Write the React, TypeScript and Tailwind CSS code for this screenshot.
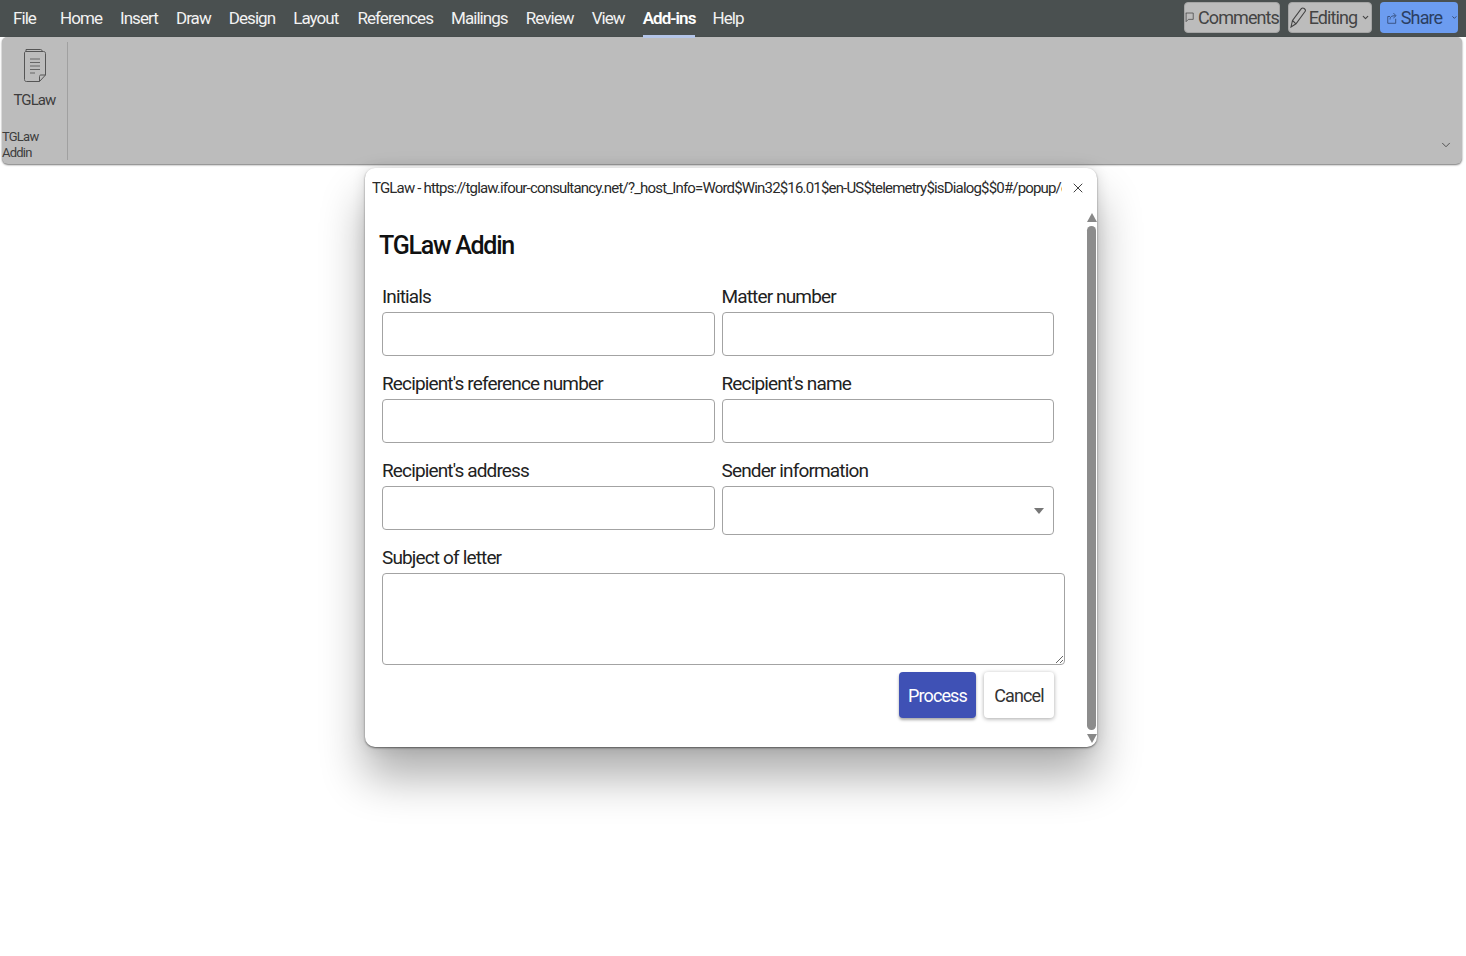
import React from 'react';
import { ChevronDown, X } from 'lucide-react';

const TABS = ['File', 'Home', 'Insert', 'Draw', 'Design', 'Layout', 'References', 'Mailings', 'Review', 'View', 'Add-ins', 'Help'];
const TAB_GAPS = ['mr-[24px]', 'mr-[18px]', 'mr-[18px]', 'mr-[18px]', 'mr-[18px]', 'mr-[19px]', 'mr-[18px]', 'mr-[18px]', 'mr-[18px]', 'mr-[18px]', 'mr-[17px]', ''];

const inputClass = 'block h-[44px] w-full rounded-[4px] border border-[#a3a3a3] bg-white outline-none';

function DocIcon() {
  return (
    <svg width="24" height="36" viewBox="0 0 24 36" fill="none" stroke="#555" strokeWidth="1">
      <path d="M3 3.5V1.5H17.5C18.5 1.5 19 2 19 3V3.5" />
      <path d="M3 3.5H20.5C21.8 3.5 22.5 4.2 22.5 5.5V27L16.5 33.5H3.5C2.2 33.5 1.5 32.8 1.5 31.5V5C1.5 4 2 3.5 3 3.5Z" />
      <path d="M16.5 33.5V28.5C16.5 27.5 17 27 18 27H22.5" />
      <path d="M7 11H17M7 14.5H17M7 18H17M7 21.5H17M7 25H12" stroke="#666" />
    </svg>
  );
}

function Field({ label, children }: { label: string; children: React.ReactNode }) {
  return (
    <label className="block">
      <span className="block h-[27px] pt-[0px] text-[19px] leading-[24px] tracking-[-0.045em] text-[#222]">{label}</span>
      {children}
    </label>
  );
}

export default function App() {
  return (
    <div className="relative h-[956px] w-full overflow-hidden bg-white font-['Roboto',sans-serif]">
      {/* Title bar with tabs */}
      <div className="flex h-[37px] items-start bg-[#4a5050] pl-[13px]">
        <nav className="flex h-[37px] items-center text-[17px] tracking-[-0.055em] text-[#f2f2f2]">
          {TABS.map((tab, i) => (
            <div key={tab} className={`relative ${TAB_GAPS[i]} ${tab === 'Add-ins' ? 'font-semibold text-white' : ''}`}>
              {tab}
              {tab === 'Add-ins' && <div className="absolute -bottom-[7px] left-0 right-0 h-[3px] bg-[#b4c5e8]" />}
            </div>
          ))}
        </nav>
        <div className="ml-auto mr-[8px] mt-[2px] flex items-start text-[18px] tracking-[-0.05em] text-[#444]">
          <div className="mr-[8px] flex h-[31px] w-[96px] items-center justify-center gap-[4px] rounded-[4px] border border-[#a5a5a5] bg-[#bcbcbc]">
            <svg width="12" height="15" viewBox="0 0 12 15" fill="none" stroke="#444" strokeWidth="1"><path d="M1 1.5H11V10H4.5L1.5 13V1.5" /></svg>
            Comments
          </div>
          <div className="mr-[8px] flex h-[31px] w-[84px] items-center justify-center gap-[2px] rounded-[4px] border border-[#a5a5a5] bg-[#bcbcbc]">
            <svg width="17" height="21" viewBox="0 0 17 21" fill="none" stroke="#444" strokeWidth="1.1"><path d="M1 20L2.5 13.5L11.5 1.5C12.3 0.8 13.2 0.8 14.2 1.5C15.5 2.5 15.8 3.5 15 4.5L6 16.8L1 20Z M2.5 13.5L6 16.8" /></svg>
            Editing
            <ChevronDown size={9} strokeWidth={3} className="ml-[2px]" />
          </div>
          <div className="flex h-[31px] w-[78px] items-center rounded-[4px] bg-[#6c9cf0] pl-[7px] text-[#2b3f63]">
            <svg width="13" height="16" viewBox="0 0 13 16" fill="none" stroke="#2b3f63" strokeWidth="1"><path d="M4 6H1V15H11.5V9M4 10C4 6.5 6 5 11 5M8.5 1.5L12 5L8.5 8" /></svg>
            <span className="ml-[4px]">Share</span>
            <ChevronDown size={9} strokeWidth={3} className="ml-[9px]" />
          </div>
        </div>
      </div>

      {/* Ribbon */}
      <div className="mx-[4px] ml-[2px] flex h-[127px] rounded-b-[6px] rounded-t-[5px] bg-[#bcbcbc] shadow-[0_1px_2px_rgba(0,0,0,0.55)]">
        <div className="mt-[5px] flex h-[118px] w-[66px] flex-col items-center border-r border-[#a0a0a0] text-[#3d3d3d]">
          <div className="mt-[6px]"><DocIcon /></div>
          <div className="mt-[7px] text-[15px] leading-[18px] tracking-[-0.06em]">TGLaw</div>
          <div className="mt-auto mb-[-1px] text-[13px] leading-[16px] tracking-[-0.06em]">TGLaw Addin</div>
        </div>
        <div className="ml-auto mr-[9px] mt-auto mb-[12px] text-[#444]">
          <ChevronDown size={14} strokeWidth={1.5} />
        </div>
      </div>

      {/* Dialog */}
      <div className="ml-[365px] mt-[4px] h-[579px] w-[732px] rounded-[10px] bg-white shadow-[0_1px_2px_rgba(0,0,0,0.5),0_30px_45px_rgba(0,0,0,0.32),0_0_14px_rgba(0,0,0,0.12)]">
        <div className="flex h-[40px] items-center pl-[7px] pr-[11px] text-[15px] tracking-[-0.055em] text-[#2a2a2a]">
          <span className="w-[690px] overflow-hidden whitespace-nowrap">TGLaw - https://tglaw.ifour-consultancy.net/?_host_Info=Word$Win32$16.01$en-US$telemetry$isDialog$$0#/popup/eyJ0eXAiOiJKV1Q...</span>
          <X size={16} strokeWidth={1.4} className="ml-auto text-[#333]" />
        </div>

        <div className="flex h-[539px]">
          <div className="w-[721px] pl-[14px] pr-[32px]">
            <h1 className="mt-[23px] text-[25px] font-medium leading-[30px] tracking-[-0.05em] text-[#111]">TGLaw Addin</h1>
            <div className="ml-[3px] mt-[24px] grid grid-cols-2 gap-x-[7px] gap-y-[16px] pr-[0px]">
              <Field label="Initials"><input className={inputClass} /></Field>
              <Field label="Matter number"><input className={inputClass} /></Field>
              <Field label="Recipient's reference number"><input className={inputClass} /></Field>
              <Field label="Recipient's name"><input className={inputClass} /></Field>
              <Field label="Recipient's address"><input className={inputClass} /></Field>
              <Field label="Sender information">
                <div className="relative">
                  <select className={`${inputClass} h-[49px] appearance-none`} />
                  <div className="absolute right-[10px] top-[22px] h-0 w-0 border-x-[5px] border-t-[6px] border-x-transparent border-t-[#777]" />
                </div>
              </Field>
              <div className="col-span-2 mt-[-5px]">
                <Field label="Subject of letter">
                  <textarea className="block h-[92px] w-[683px] resize-y rounded-[4px] border border-[#a3a3a3] bg-white outline-none" />
                </Field>
              </div>
            </div>
            <div className="ml-[-1px] mt-[7px] flex justify-end gap-[8px] pr-[-1px] text-[18px] tracking-[-0.05em]">
              <button className="h-[46px] w-[77px] rounded-[4px] bg-[#3f51b5] text-white shadow-[0_2px_3px_rgba(0,0,0,0.35)]">Process</button>
              <button className="h-[46px] w-[70px] rounded-[4px] bg-white text-[#333] shadow-[0_1px_4px_rgba(0,0,0,0.35)]">Cancel</button>
            </div>
          </div>

          {/* Scrollbar */}
          <div className="flex w-[11px] flex-col items-center pb-[4px] pt-[5px]">
            <div className="h-0 w-0 border-x-[5px] border-b-[9px] border-x-transparent border-b-[#888]" />
            <div className="my-[4px] w-[9px] flex-1 rounded-full bg-[#8c8c8c]" />
            <div className="h-0 w-0 border-x-[5px] border-t-[9px] border-x-transparent border-t-[#888]" />
          </div>
        </div>
      </div>
    </div>
  );
}
